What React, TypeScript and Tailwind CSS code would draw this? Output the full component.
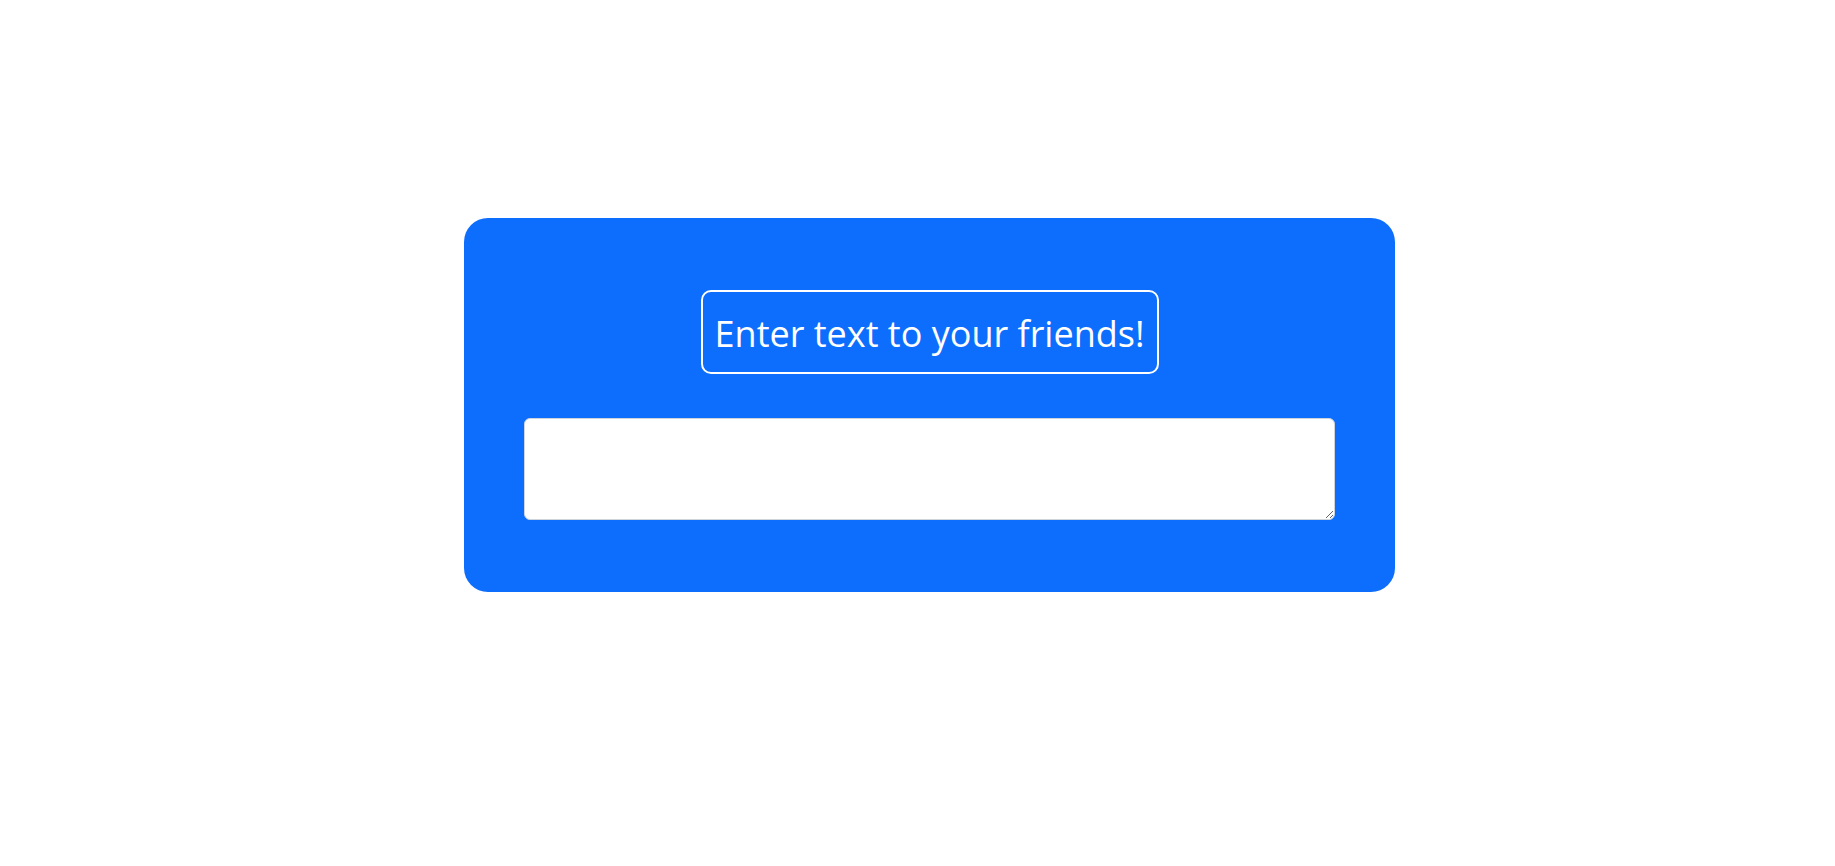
export default function App() {
  return (
    <div className="min-h-[866px] w-full bg-white pt-[218px]">
      <div className="ml-[464px] flex w-[931px] flex-col items-center rounded-[24px] bg-[#0d6efd] px-[60px] pt-[72px] pb-[72px]">
        <div className="flex h-[84px] w-[458px] items-center justify-center rounded-[10px] border-2 border-white pt-[3px]">
          <h1
            className="m-0 whitespace-nowrap text-[36px] font-normal leading-[48px] text-white"
            style={{ fontFamily: '"Open Sans", "Noto Sans", sans-serif' }}
          >
            Enter text to your friends!
          </h1>
        </div>
        <textarea className="mt-[44px] block h-[102px] w-[811px] rounded-[6px] border border-[#ced4da] bg-white px-3 py-1.5 text-base outline-none" />
      </div>
    </div>
  );
}
